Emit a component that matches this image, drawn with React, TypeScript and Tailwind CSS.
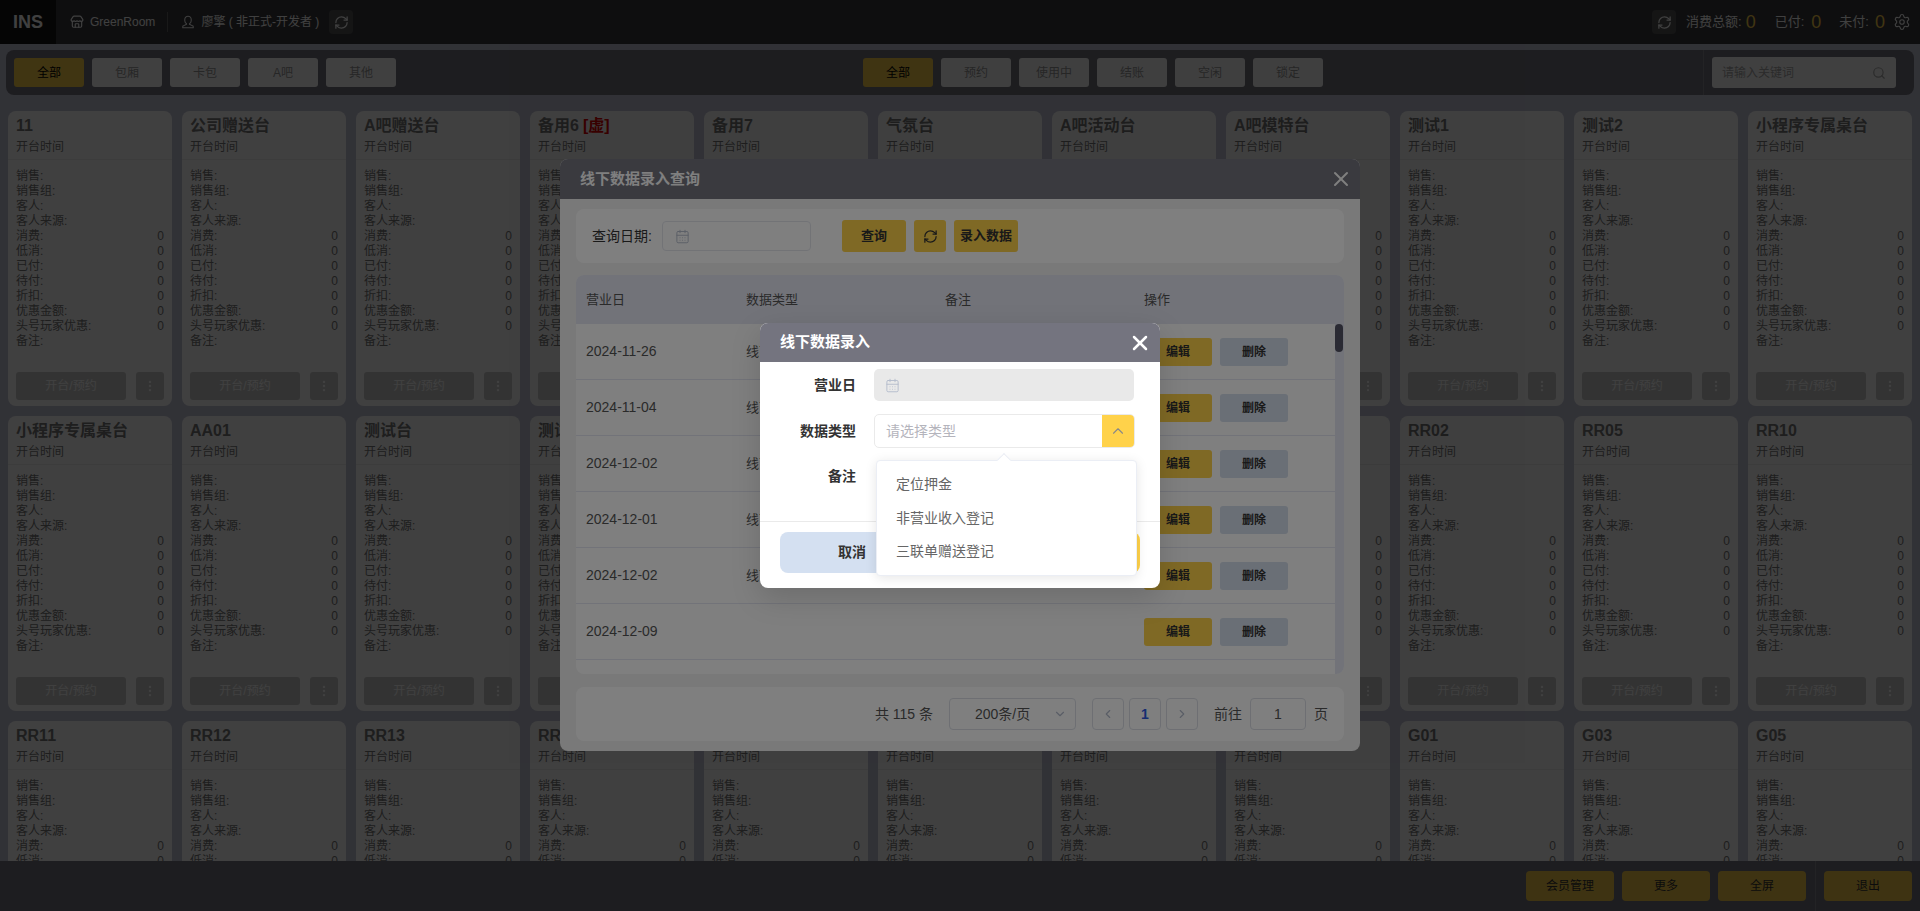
import { CalendarDays, ChevronDown, ChevronLeft, ChevronRight, ChevronUp, EllipsisVertical, RefreshCw, Search, Settings, Store, X } from "lucide-react";

const FONT = "[font-family:'Liberation_Sans','Noto_Sans_CJK_SC',sans-serif]";

const ROWS: [string, boolean][] = [
  ["销售", false],
  ["销售组", false],
  ["客人", false],
  ["客人来源", false],
  ["消费", true],
  ["低消", true],
  ["已付", true],
  ["待付", true],
  ["折扣", true],
  ["优惠金额", true],
  ["头号玩家优惠", true],
  ["备注", false],
];

const TABLES = [
  "11", "公司赠送台", "A吧赠送台", "备用6", "备用7", "气氛台", "A吧活动台", "A吧模特台", "测试1", "测试2", "小程序专属桌台",
  "小程序专属桌台", "AA01", "测试台", "测试台2", "RR01", "A02", "A03", "A05", "RR02", "RR05", "RR10",
  "RR11", "RR12", "RR13", "RR15", "RR16", "RR17", "RR18", "G00", "G01", "G03", "G05",
];

const RECORDS = [
  ["2024-11-26", "线下数据录入"],
  ["2024-11-04", "线下数据录入"],
  ["2024-12-02", "线下数据录入"],
  ["2024-12-01", "线下数据录入"],
  ["2024-12-02", "线下数据录入"],
  ["2024-12-09", ""],
];

function UserIcon() {
  return (
    <svg width="14" height="14" viewBox="0 0 24 24" fill="none" stroke="currentColor" strokeWidth="1.8" strokeLinejoin="round" className="ml-[13px]">
      <path d="M12 2a5.5 5.5 0 0 0-5.500 5.500V10a5.500 5.500 0 0 0 3 4.900V16L4 18.600a1.500 1.500 0 0 0-1 1.400v2h18v-2a1.500 1.500 0 0 0-1-1.400L14.500 16v-1.100a5.500 5.500 0 0 0 3-4.900V7.500A5.500 5.500 0 0 0 12 2z" />
    </svg>
  );
}

function FilterButton({ label, active }: { label: string; active?: boolean }) {
  return (
    <button
      className={`h-[29px] w-[70px] rounded-[3px] text-[12px] ${
        active ? "bg-[#ffd24a] text-black" : "bg-white text-[#999]"
      }`}
    >
      {label}
    </button>
  );
}

function TableCard({ name }: { name: string }) {
  return (
    <div className="flex h-[295px] flex-col rounded-lg bg-white text-[#777]">
      <div className="h-[49px] border-b border-[#eee] px-2 pt-[5px]">
        <div className="text-[16px] leading-[19px] font-bold text-[#777]">
          {name}
          {name === "备用6" && <span className="ml-1 text-[#e00000]">[虚]</span>}
        </div>
        <div className="mt-[5px] text-[12px] leading-[15px]">开台时间</div>
      </div>
      <div className="flex-1 px-2 pt-[9px] text-[12px] leading-[15px]">
        {ROWS.map(([label, hasValue]) => (
          <div key={label} className="flex h-[15px] justify-between">
            <span>{label}:</span>
            {hasValue && <span>0</span>}
          </div>
        ))}
      </div>
      <div className="flex gap-[10px] px-2 pb-[6px]">
        <button className="h-[28px] w-[110px] rounded-[3px] bg-[#ccc] text-[12px] text-white">开台/预约</button>
        <button className="flex h-[28px] w-[28px] items-center justify-center rounded-[3px] bg-[#ccc] text-white">
          <EllipsisVertical size={14} />
        </button>
      </div>
    </div>
  );
}

function BottomButton({ label }: { label: string }) {
  return <button className="h-[30px] w-[88px] rounded-[4px] bg-[#f8cc48] text-[12px] text-[#333]">{label}</button>;
}

function RecordModal() {
  return (
    <div className="fixed top-[159px] left-[560px] flex h-[592px] w-[800px] flex-col overflow-hidden rounded-lg bg-[#f2f2f2]">
      <div className="flex h-[40px] shrink-0 items-center justify-between bg-[#74747f] pr-[7px] pl-[20px] text-white">
        <span className="text-[15px] font-bold">线下数据录入查询</span>
        <X size={24} strokeWidth={2} />
      </div>
      <div className="flex flex-1 flex-col px-4 pt-[10px]">
        <div className="flex h-[54px] shrink-0 items-center rounded-lg bg-white pl-4 text-[14px] text-[#333]">
          <span className="w-[70px]">查询日期:</span>
          <div className="flex h-[30px] w-[149px] items-center rounded border border-[#e4e7ed] pl-[12px] text-[#b4bccc]">
            <CalendarDays size={15} strokeWidth={1.5} />
          </div>
          <button className="ml-[31px] h-[32px] w-[64px] rounded-[3px] bg-[#ffd24a] text-[13px] font-bold text-[#333]">查询</button>
          <button className="ml-2 flex h-[32px] w-[32px] items-center justify-center rounded-[3px] bg-[#ffd24a] text-[#333]">
            <RefreshCw size={15} />
          </button>
          <button className="ml-2 h-[32px] w-[64px] rounded-[3px] bg-[#ffd24a] text-[13px] font-bold text-[#333]">录入数据</button>
        </div>
        <div className="relative mt-3 h-[399px] shrink-0 overflow-hidden rounded-lg bg-white text-[13px] text-[#555]">
          <div className="flex h-[49px] items-center bg-[#e4e6f2]">
            <span className="w-[170px] pl-[10px]">营业日</span>
            <span className="w-[199px]">数据类型</span>
            <span className="w-[199px]">备注</span>
            <span>操作</span>
          </div>
          {RECORDS.map(([date, kind], i) => (
            <div key={i} className="flex h-[56px] items-center border-b border-[#e4e6f2]">
              <span className="w-[170px] pl-[10px] text-[14px]">{date}</span>
              <span className="w-[398px]">{kind}</span>
              <button className="h-[28px] w-[68px] rounded-[3px] bg-[#ffd24a] text-[12px] font-bold text-[#333]">编辑</button>
              <button className="ml-2 h-[28px] w-[68px] rounded-[3px] bg-[#d5deec] text-[12px] font-bold text-[#333]">删除</button>
            </div>
          ))}
          <div className="absolute top-[49px] right-0 bottom-0 w-[9px] bg-[#e4e6f2]">
            <div className="h-[28px] w-[8px] rounded bg-[#555566]" />
          </div>
        </div>
        <div className="mt-[13px] flex h-[54px] shrink-0 items-center justify-end rounded-lg bg-white pr-[16px] text-[14px] text-[#555]">
          <span>共 115 条</span>
          <div className="ml-[16px] flex h-[32px] w-[127px] items-center justify-between rounded border border-[#dcdfe6] pr-2 pl-[25px]">
            200条/页
            <ChevronDown size={14} className="text-[#b4bccc]" />
          </div>
          <div className="ml-4 flex h-[32px] w-[32px] items-center justify-center rounded border border-[#dcdfe6] text-[#b4bccc]">
            <ChevronLeft size={14} />
          </div>
          <div className="ml-[5px] flex h-[32px] w-[32px] items-center justify-center rounded border border-[#dcdfe6] font-bold text-[#2d5be3]">
            1
          </div>
          <div className="ml-[5px] flex h-[32px] w-[32px] items-center justify-center rounded border border-[#dcdfe6] text-[#b4bccc]">
            <ChevronRight size={14} />
          </div>
          <span className="ml-4">前往</span>
          <div className="ml-2 flex h-[32px] w-[56px] items-center justify-center rounded border border-[#dcdfe6]">1</div>
          <span className="ml-2">页</span>
        </div>
      </div>
    </div>
  );
}

function EntryModal() {
  return (
    <div className="fixed top-[323px] left-[760px] h-[265px] w-[400px] rounded-lg bg-white shadow-[0_10px_30px_rgba(0,0,0,0.15)]">
      <div className="flex h-[39px] items-center justify-between rounded-t-lg bg-[#74747f] pr-[8px] pl-[20px] text-white">
        <span className="text-[15px] font-bold">线下数据录入</span>
        <X size={24} strokeWidth={2.5} />
      </div>
      <div className="h-[160px] border-b border-[#eaeaea] pt-[7px]">
        <div className="flex items-center">
          <label className="w-[96px] text-right text-[14px] font-bold text-[#333]">营业日</label>
          <div className="ml-[18px] flex h-[32px] w-[260px] items-center rounded-[5px] bg-[#e9e9e9] pl-[11px] text-[#b4bccc]">
            <CalendarDays size={15} strokeWidth={1.5} />
          </div>
        </div>
        <div className="mt-[13px] flex items-center">
          <label className="w-[96px] text-right text-[14px] font-bold text-[#333]">数据类型</label>
          <div className="ml-[18px] flex h-[34px] w-[261px] items-center justify-between overflow-hidden rounded-[5px] border border-[#eaeaea] text-[14px] text-[#b4b4bc]">
            <span className="pl-[11px]">请选择类型</span>
            <div className="flex h-full w-[32px] items-center justify-center bg-[#ffd24a] text-[#888]">
              <ChevronUp size={18} strokeWidth={1.5} />
            </div>
          </div>
        </div>
        <div className="mt-[18px] flex">
          <label className="w-[96px] text-right text-[14px] font-bold text-[#333]">备注</label>
        </div>
      </div>
      <div className="flex justify-between px-[20px] pt-[10px]">
        <button className="h-[41px] w-[144px] rounded-lg bg-[#d4e0f1] text-[14px] font-bold text-[#333]">取消</button>
        <button className="h-[41px] w-[144px] rounded-lg bg-[#ffd24a] text-[14px] font-bold text-[#333]">确定</button>
      </div>
      <div className="absolute top-[137px] left-[116px] w-[261px] rounded border border-[#ebeef5] bg-white pt-[7px] pb-[6px] text-[14px] text-[#666] shadow-[0_2px_12px_rgba(0,0,0,0.1)]">
        <div className="absolute -top-[6px] left-[122px] h-[10px] w-[10px] rotate-45 border-t border-l border-[#ebeef5] bg-white" />
        <div className="flex h-[33.5px] items-center pl-[19px]">定位押金</div>
        <div className="flex h-[33.5px] items-center pl-[19px]">非营业收入登记</div>
        <div className="flex h-[33.5px] items-center pl-[19px]">三联单赠送登记</div>
      </div>
    </div>
  );
}

export default function App() {
  return (
    <div className={`flex h-[911px] flex-col overflow-hidden bg-[#c4c6d8] ${FONT}`}>
      <header className="flex h-[44px] shrink-0 items-center bg-[#38383c] text-[12px] text-white">
        <div className="flex h-full w-[56px] items-center justify-center bg-[#141414] text-[18px] font-bold">INS</div>
        <Store size={14} className="ml-[14px]" />
        <span className="ml-[6px]">GreenRoom</span>
        <div className="ml-[12px] h-[20px] w-px bg-[#666]" />
        <UserIcon />
        <span className="ml-[6px]">廖擎 ( 非正式-开发者 )</span>
        <button className="ml-[10px] flex h-[24px] w-[24px] items-center justify-center rounded bg-[#555]">
          <RefreshCw size={15} />
        </button>
        <div className="ml-auto flex items-center text-[13px]">
          <button className="flex h-[24px] w-[24px] items-center justify-center rounded bg-[#555]">
            <RefreshCw size={15} />
          </button>
          <span className="ml-[10px]">消费总额:</span>
          <span className="ml-[4px] text-[18px] text-[#ffd24a]">0</span>
          <span className="ml-[19px]">已付:</span>
          <span className="ml-[7px] text-[18px] text-[#ffd24a]">0</span>
          <span className="ml-[18px]">未付:</span>
          <span className="ml-[6px] text-[18px] text-[#ffd24a]">0</span>
          <Settings size={18} strokeWidth={1.5} className="mr-[9px] ml-[8px]" />
        </div>
      </header>

      <div className="mx-[6px] mt-[6px] flex h-[45px] shrink-0 rounded-lg bg-[#74747f]">
        <div className="flex w-[857px] items-center gap-2 pl-2">
          {["全部", "包厢", "卡包", "A吧", "其他"].map((t, i) => (
            <FilterButton key={t} label={t} active={i === 0} />
          ))}
        </div>
        <div className="flex flex-1 items-center gap-2">
          {["全部", "预约", "使用中", "结账", "空闲", "锁定"].map((t, i) => (
            <FilterButton key={t} label={t} active={i === 0} />
          ))}
        </div>
        <div className="flex w-[211px] items-center border-l border-[#8a8a94] pl-[8px]">
          <div className="flex h-[31px] w-[184px] items-center justify-between rounded-[3px] bg-white px-[10px] text-[12px] text-[#aaa]">
            请输入关键词
            <Search size={14} />
          </div>
        </div>
      </div>

      <main className="min-h-0 flex-1 overflow-hidden px-2 pt-[16px]">
        <div className="grid grid-cols-[repeat(11,minmax(0,1fr))] gap-[10px]">
          {TABLES.map((name, i) => (
            <TableCard key={i} name={name} />
          ))}
        </div>
      </main>

      <footer className="flex h-[50px] shrink-0 items-center justify-end gap-2 bg-[#74747f] pr-2">
        <BottomButton label="会员管理" />
        <BottomButton label="更多" />
        <BottomButton label="全屏" />
        <div className="ml-[1px] h-full w-px bg-[#8a8a94]" />
        <BottomButton label="退出" />
      </footer>

      <div className="fixed inset-0 bg-black/50" />
      <RecordModal />
      <div className="fixed inset-0 bg-black/50" />
      <EntryModal />
    </div>
  );
}
